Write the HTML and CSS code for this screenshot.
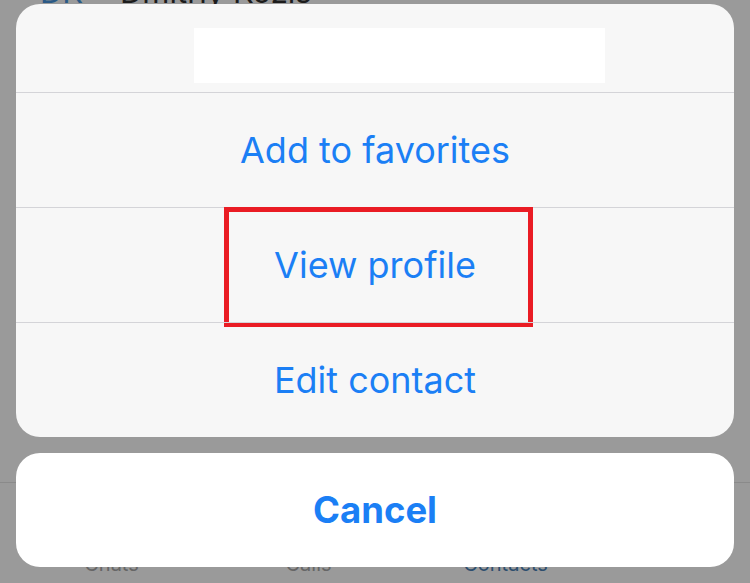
FILE: index.html
```html
<!DOCTYPE html>
<html lang="en">
<head>
  <meta charset="UTF-8">
  <meta name="viewport" content="width=device-width, initial-scale=1.0">
  <title>Contact actions</title>
  <link rel="stylesheet" href="styles.css">
</head>
<body>
  <div class="screen">
    <!-- the contacts list behind the dimmed overlay -->
    <div class="contact-row">
      <span class="initials">DK</span>
      <span class="contact-name">Dmitriy Kozis</span>
    </div>
    <div class="tab-bar">
      <span class="tab">Chats</span>
      <span class="tab">Calls</span>
      <span class="tab active">Contacts</span>
    </div>

    <!-- action sheet -->
    <div class="action-sheet">
      <div class="sheet-group">
        <div class="sheet-header">
          <div class="title-box"></div>
        </div>
        <div class="sheet-item">Add to favorites</div>
        <div class="sheet-item highlighted">
          View profile
          <div class="highlight-box"></div>
        </div>
        <div class="sheet-item">Edit contact</div>
      </div>
      <div class="sheet-cancel">Cancel</div>
    </div>
  </div>
</body>
</html>
```

FILE: styles.css
```css
html, body {
  margin: 0;
  padding: 0;
}
body {
  font-family: Inter, "Liberation Sans", Arial, sans-serif;
  background-color: #9a9a9a; /* dimmed backdrop */
}
.screen {
  position: relative;
  width: 750px;
  height: 583px;
  overflow: hidden;
  display: flex;
  flex-direction: column;
  justify-content: space-between;
}
.contact-row {
  display: flex;
  align-items: flex-end;
  height: 7px;
  overflow: hidden;
  font-size: 31px;
  line-height: 1;
}
.initials {
  width: 80px;
  padding-left: 40px;
  color: #2b5a86;
}
.contact-name {
  color: #1c1c1c;
}
.tab-bar {
  display: grid;
  grid-template-columns: 197px 197px 197px;
  padding-left: 13px;
  padding-bottom: 9px;
  height: 101px;
  box-sizing: border-box;
  border-top: 1px solid #8a8a8a;
  align-items: end;
}
.tab {
  text-align: center;
  font-size: 20px;
  line-height: 1;
  color: #666666;
}
.tab.active {
  color: #2d4e6e;
}
.action-sheet {
  position: absolute;
  top: 4px;
  left: 16px;
  right: 16px;
  display: flex;
  flex-direction: column;
  gap: 16px;
}
.sheet-group {
  background-color: #f7f7f7;
  border-radius: 24px;
  overflow: hidden;
}
.sheet-header {
  height: 88px;
  padding-top: 24px;
  box-sizing: border-box;
}
.title-box {
  margin-left: 178px;
  width: 411px;
  height: 55px;
  background-color: #ffffff;
}
.sheet-item {
  position: relative;
  height: 115px;
  box-sizing: border-box;
  border-top: 1px solid #d4d4d8;
  display: flex;
  align-items: center;
  justify-content: center;
  font-size: 36px;
  color: #1b7ff5;
}
.highlight-box {
  position: absolute;
  top: -1px;
  left: 208px;
  width: 309px;
  height: 120px;
  box-sizing: border-box;
  border: 5px solid #ea1c24;
}
.sheet-cancel {
  height: 114px;
  background-color: #ffffff;
  border-radius: 24px;
  display: flex;
  align-items: center;
  justify-content: center;
  font-size: 36.5px;
  font-weight: bold;
  color: #1b7ff5;
}
```
